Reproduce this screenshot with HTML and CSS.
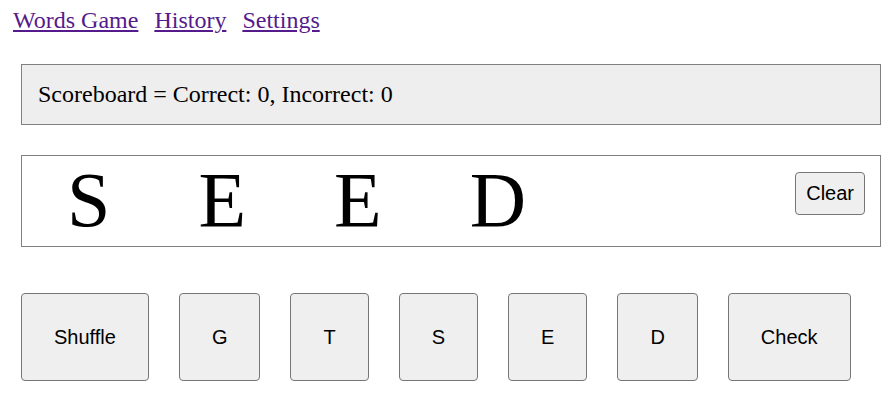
FILE: index.html
```html
<!DOCTYPE html>
<html>
<head>
<meta charset="utf-8">
<link rel="stylesheet" href="styles.css">
</head>
<body>
<nav class="nav">
  <a href="#" class="nav-link">Words Game</a>
  <a href="#" class="nav-link">History</a>
  <a href="#" class="nav-link">Settings</a>
</nav>
<div class="scoreboard">Scoreboard = Correct: 0, Incorrect: 0</div>
<div class="word-box">
  <div class="word">
    <span class="letter">S</span>
    <span class="letter">E</span>
    <span class="letter">E</span>
    <span class="letter">D</span>
  </div>
  <button class="btn clear-btn">Clear</button>
</div>
<div class="controls">
  <button class="btn key">Shuffle</button>
  <button class="btn key">G</button>
  <button class="btn key">T</button>
  <button class="btn key">S</button>
  <button class="btn key">E</button>
  <button class="btn key">D</button>
  <button class="btn key">Check</button>
</div>
</body>
</html>
```

FILE: styles.css
```css
html, body {
  margin: 0;
  padding: 0;
  background: #fff;
}
body {
  font-family: "Liberation Serif", "Times New Roman", serif;
  font-size: 24px;
  color: #000;
  padding: 7px 13px 0 21px;
}
.nav {
  display: flex;
  gap: 16px;
  margin-left: -8px;
  line-height: 27.6px;
}
.nav-link {
  color: #551a8b;
  text-decoration: underline;
}
.scoreboard {
  margin-top: 29px;
  background: #eeeeee;
  border: 1px solid #808080;
  padding: 16px;
  line-height: 27.6px;
}
.word-box {
  margin-top: 30px;
  border: 1px solid #808080;
  display: flex;
  justify-content: space-between;
  align-items: flex-start;
  height: 90px;
}
.word {
  display: flex;
  gap: 88px;
  padding-left: 45px;
  font-size: 78px;
  line-height: 88px;
}
.btn {
  font-family: "Liberation Sans", Arial, Helvetica, sans-serif;
  font-size: 20px;
  line-height: 23px;
  color: #000;
  background: #efefef;
  border: 1px solid #767676;
  border-radius: 4px;
}
.clear-btn {
  margin: 16px 15px 0 0;
  padding: 9px 10px;
}
.controls {
  margin-top: 46px;
  display: flex;
  gap: 30px;
}
.key {
  padding: 31.5px 32px;
}
```
